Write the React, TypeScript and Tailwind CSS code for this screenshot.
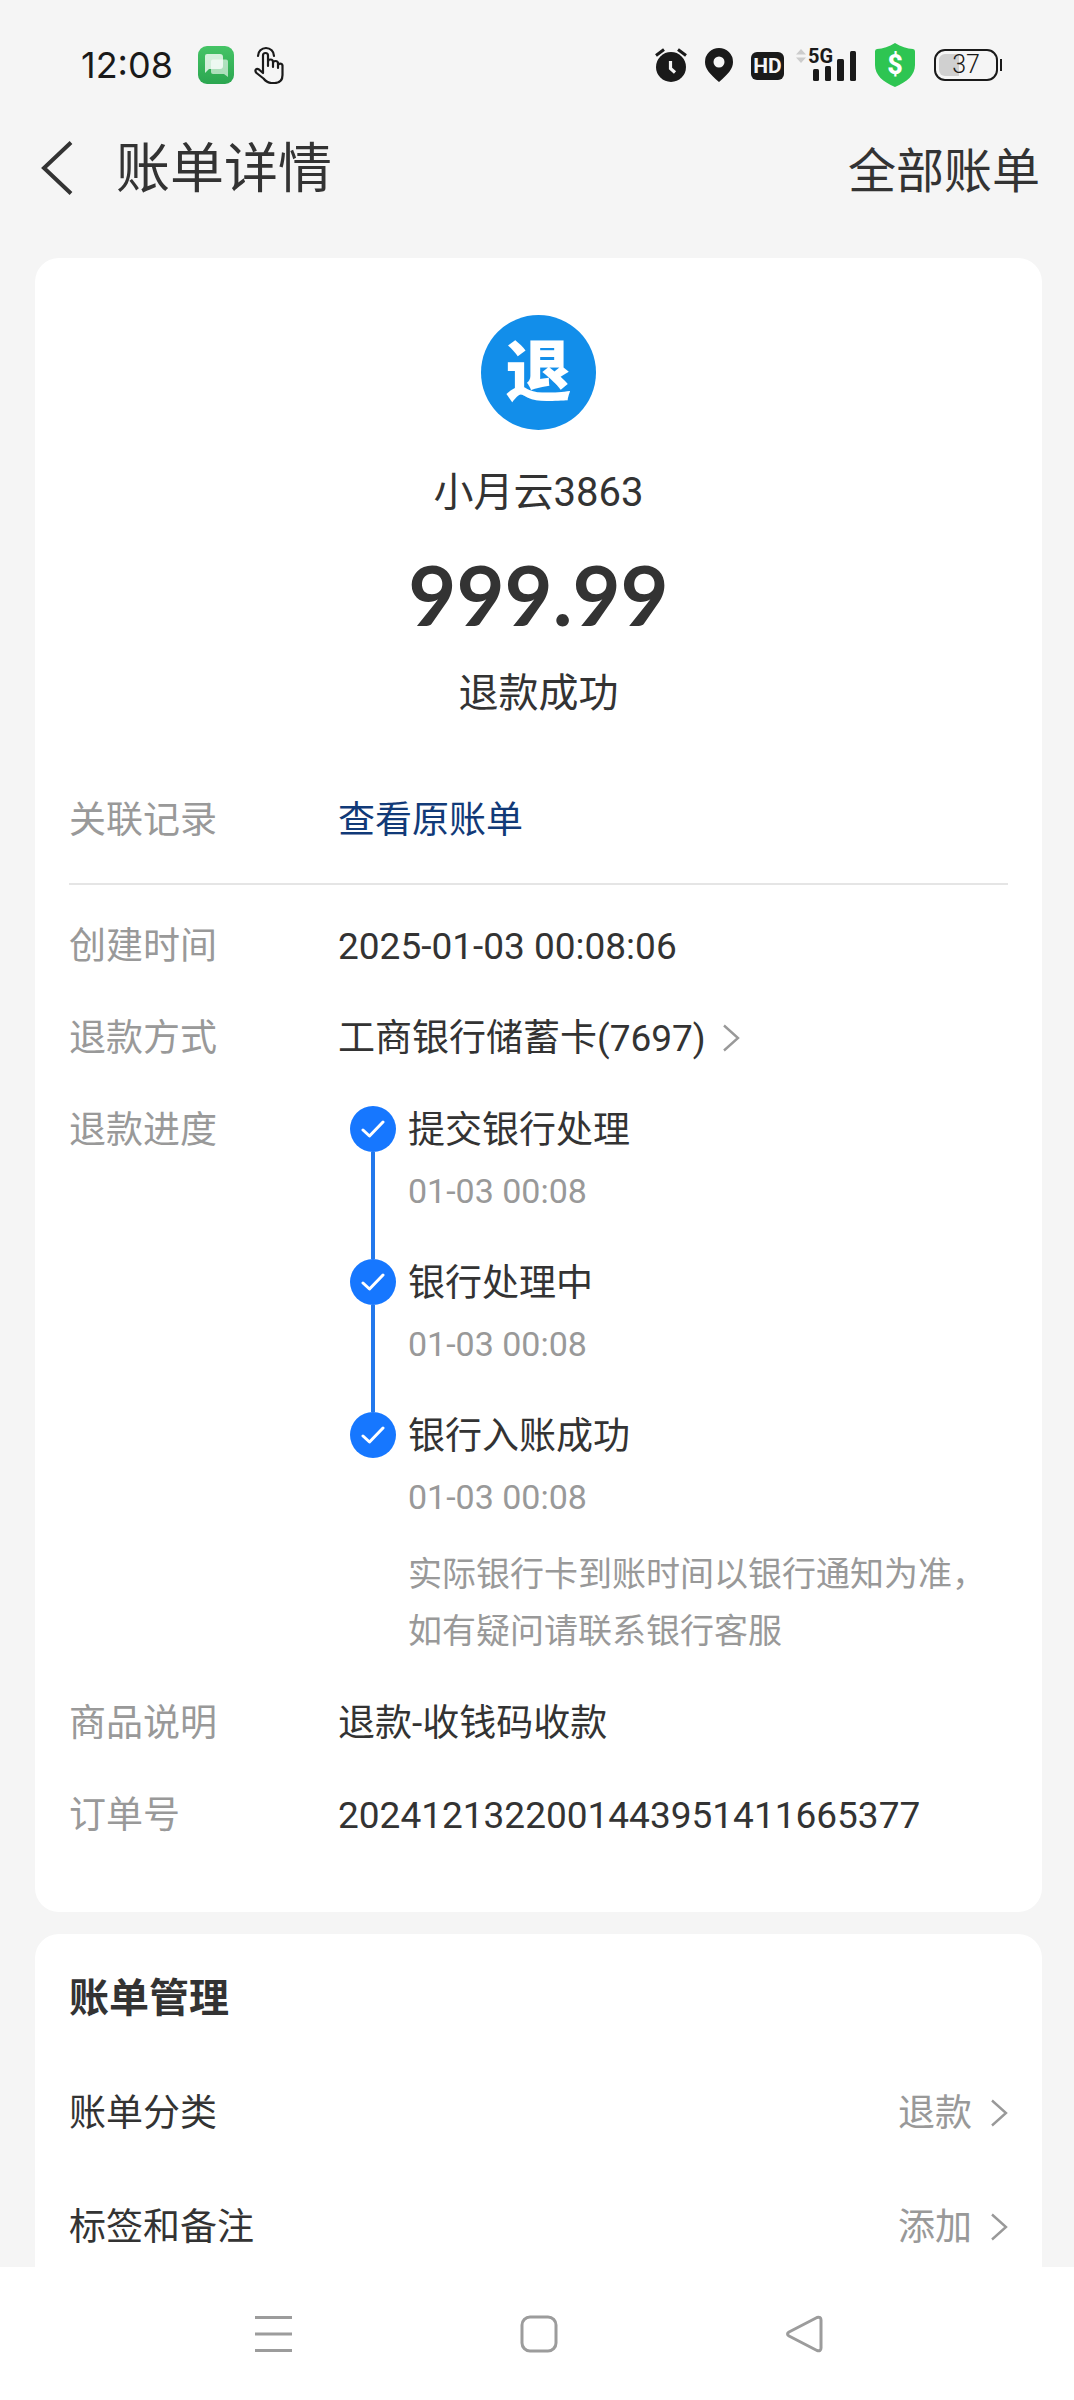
import type { ReactNode } from 'react';

const STEPS = [
  { title: '提交银行处理', time: '01-03 00:08' },
  { title: '银行处理中', time: '01-03 00:08' },
  { title: '银行入账成功', time: '01-03 00:08' },
];

const MANAGE = [
  { label: '账单分类', value: '退款' },
  { label: '标签和备注', value: '添加' },
];

function ChevronRight() {
  return (
    <svg className="mb-0.5 shrink-0" width="18" height="28" viewBox="0 0 18 28" fill="none" stroke="#999" strokeWidth="2.4" aria-hidden="true">
      <path d="M2 1.5 16 14 2 26.5" />
    </svg>
  );
}

function MessageIcon() {
  return (
    <svg width="36" height="38" viewBox="0 0 36 38" aria-hidden="true">
      <defs>
        <linearGradient id="msg" x1="0" y1="0" x2="0" y2="1">
          <stop offset="0" stopColor="#45c466" />
          <stop offset="1" stopColor="#2ba650" />
        </linearGradient>
      </defs>
      <rect width="36" height="38" rx="9" fill="url(#msg)" />
      <path d="M15 13.5h13q2 0 2 2V31l-4-3H15q-2 0-2-2V15.5q0-2 2-2z" fill="#fff" opacity=".6" />
      <path d="M9 8h13q3 0 3 3v9q0 3-3 3H11l-4 4V10q0-2 2-2z" fill="#fff" opacity=".78" />
    </svg>
  );
}

function TapIcon() {
  return (
    <svg width="30" height="38" viewBox="0 0 30 38" fill="none" stroke="#1a1a1a" strokeWidth="2.2" strokeLinecap="round" strokeLinejoin="round" aria-hidden="true">
      <path d="M4 10a8 8 0 0 1 16 0" />
      <path d="M9 25V9.5a2.5 2.5 0 0 1 5 0V20v-4a2.5 2.5 0 0 1 5 0v5-3.5a2.5 2.5 0 0 1 5 0V22v-2.5a2.3 2.3 0 0 1 4.5 0V29c0 5-3 8-8 8h-3c-4 0-6-2-8-4.500L2.500 27C0 24 2.500 22 5 23.500L9 27z" />
    </svg>
  );
}

function AlarmIcon() {
  return (
    <svg width="32" height="34" viewBox="0 0 32 34" aria-hidden="true">
      <circle cx="16" cy="19" r="15" fill="#1a1a1a" />
      <path d="M1 7.5 9 1.5M31 7.5 23 1.5" stroke="#1a1a1a" strokeWidth="3" />
      <path d="M15.5 13v7.5l4.500 4" stroke="#f5f5f5" strokeWidth="3.2" fill="none" />
    </svg>
  );
}

function PinIcon() {
  return (
    <svg width="28" height="34" viewBox="0 0 28 34" aria-hidden="true">
      <path fillRule="evenodd" d="M14 0a14 14 0 0 1 14 14c0 7-5 12-14 20C5 26 0 21 0 14A14 14 0 0 1 14 0zm0 8.5a5.5 5.5 0 1 0 0 11 5.5 5.5 0 0 0 0-11z" fill="#1a1a1a" />
    </svg>
  );
}

function SignalIcon() {
  return (
    <svg className="overflow-visible" width="60" height="34" viewBox="0 0 60 34" aria-hidden="true">
      <path d="M0 6.5 5 1l5 5.5zM0 9.5l5 5.5 5-5.5z" fill="#ccc" />
      <text x="12" y="15" fontSize="20" fontWeight="700" fill="#1a1a1a">5G</text>
      <rect x="17" y="21" width="6" height="12" rx="1.5" fill="#1a1a1a" />
      <rect x="29" y="18" width="6" height="15" rx="1.5" fill="#1a1a1a" />
      <rect x="41" y="11" width="7" height="22" rx="1.5" fill="#1a1a1a" />
      <rect x="54" y="3" width="6" height="30" rx="1.5" fill="#1a1a1a" />
    </svg>
  );
}

function ShieldIcon() {
  return (
    <svg width="42" height="44" viewBox="0 0 42 44" aria-hidden="true">
      <path d="M21 0c6 4 12 5.5 18 6q2 .3 2 2.5V22c0 10-8 17-20 22C9 39 1 32 1 22V8.500Q1 6.300 3 6c6-.5 12-2 18-6z" fill="#2ec552" />
      <text x="21" y="31" textAnchor="middle" fontSize="27" fontWeight="800" fill="#fff">$</text>
    </svg>
  );
}

function Row({ label, children }: { label: string; children: ReactNode }) {
  return (
    <div className="flex">
      <dt className="w-[269px] shrink-0 leading-14 text-[#999]">{label}</dt>
      <dd className="min-w-0 flex-1 leading-14">{children}</dd>
    </div>
  );
}

function StatusBar() {
  return (
    <div className="flex h-[130px] items-center justify-between pr-[72px] pl-[81px] text-[#1a1a1a]">
      <div className="flex items-center">
        <span className="mr-[25px] font-[Inter,sans-serif] text-[36px]">12:08</span>
        <MessageIcon />
        <span className="ml-5">
          <TapIcon />
        </span>
      </div>
      <div className="flex items-center gap-[18px]">
        <AlarmIcon />
        <PinIcon />
        <span className="mt-0.5 flex h-7 w-[33px] items-center justify-center rounded-md bg-[#1a1a1a] text-[21px] leading-7 font-bold text-[#f5f5f5]">HD</span>
        <div className="-ml-1.5">
          <SignalIcon />
        </div>
        <ShieldIcon />
        <div className="flex items-center gap-0.5">
          <div className="relative flex h-8 w-16 items-center justify-center rounded-[11px] border-2 border-[#1a1a1a] text-[25px] font-light">
            <span className="absolute inset-y-[3px] left-[3px] w-[20px] rounded-l-[6px] bg-[#d0d0d0]" />
            <span className="relative">37</span>
          </div>
          <span className="h-3 w-0.5 bg-[#1a1a1a]" />
        </div>
      </div>
    </div>
  );
}

function Header() {
  return (
    <header className="mb-[52px] flex h-[76px] items-center justify-between pr-[34px] pl-[41px]">
      <div className="flex items-center gap-[43px]">
        <button type="button" aria-label="返回">
          <svg width="32" height="54" viewBox="0 0 32 54" fill="none" stroke="#333" strokeWidth="4" aria-hidden="true">
            <path d="M30 1.5 3 27l27 25.5" />
          </svg>
        </button>
        <h1 className="pt-1 text-[54px] leading-18">账单详情</h1>
      </div>
      <a href="#all" className="pt-2 text-[48px] leading-18">全部账单</a>
    </header>
  );
}

function Progress() {
  return (
    <>
      <ol>
        {STEPS.map((step, i) => (
          <li key={step.title} className="flex gap-3 pl-3">
            <div className="flex w-[46px] flex-col items-center">
              <span className="mt-[3px] flex size-[46px] shrink-0 items-center justify-center rounded-full bg-[#1677ff]">
                <svg width="24" height="18" viewBox="0 0 24 18" fill="none" stroke="#fff" strokeWidth="3" strokeLinecap="round" strokeLinejoin="round" aria-hidden="true">
                  <path d="M2 10 8.5 16 22 2" />
                </svg>
              </span>
              {i < STEPS.length - 1 && <span className="-mb-[3px] w-1 flex-1 bg-[#2278ec]" />}
            </div>
            <div className={i < STEPS.length - 1 ? 'pb-[41px]' : ''}>
              <p>{step.title}</p>
              <p className="mt-2 text-[34px] leading-12 text-[#999]">{step.time}</p>
            </div>
          </li>
        ))}
      </ol>
      <p className="mt-[25px] pl-[70px] text-[34px] leading-[57px] text-[#999]">
        实际银行卡到账时间以银行通知为准，
        <br />
        如有疑问请联系银行客服
      </p>
    </>
  );
}

function BillCard() {
  return (
    <section className="rounded-3xl bg-white px-[34px] pt-[57px] pb-[68px]">
      <div className="flex flex-col items-center">
        <div className="flex size-[115px] items-center justify-center rounded-full bg-[#128eea] text-[66px] font-black text-white">退</div>
        <p className="mt-[35px] text-[40px] leading-14">小月云3863</p>
        <p className="mt-[25px] font-[Lato,sans-serif] text-[83px] leading-24 font-bold">999.99</p>
        <p className="mt-6 text-[40px] leading-14">退款成功</p>
      </div>

      <dl className="mt-[71px] border-b-2 border-[#e5e5e5] pb-[34px]">
        <Row label="关联记录">
          <a href="#origin" className="text-[#113a78]">查看原账单</a>
        </Row>
      </dl>

      <dl className="mt-[34px] flex flex-col gap-9">
        <Row label="创建时间">2025-01-03 00:08:06</Row>
        <Row label="退款方式">
          <a href="#card" className="flex items-center gap-4">
            工商银行储蓄卡(7697)
            <ChevronRight />
          </a>
        </Row>
        <Row label="退款进度">
          <Progress />
        </Row>
        <Row label="商品说明">退款-收钱码收款</Row>
        <Row label="订单号">2024121322001443951411665377</Row>
      </dl>
    </section>
  );
}

function ManageCard() {
  return (
    <section className="mt-[22px] flex-1 rounded-t-3xl bg-white px-[34px] pt-[37px] pb-[11px]">
      <h2 className="mb-[59px] text-[40px] leading-14 font-bold">账单管理</h2>
      <div className="flex flex-col gap-[58px]">
        {MANAGE.map((item) => (
          <a key={item.label} href="#manage" className="flex items-center justify-between leading-14">
            <span>{item.label}</span>
            <span className="flex items-center gap-[18px] text-[#999]">
              {item.value}
              <ChevronRight />
            </span>
          </a>
        ))}
      </div>
    </section>
  );
}

function NavBar() {
  return (
    <nav className="grid h-[133px] grid-cols-3 items-center justify-items-center bg-white pr-[138px] pl-[142px]">
      <button type="button" aria-label="最近任务">
        <svg width="38" height="38" viewBox="0 0 38 38" fill="none" stroke="#9c9c9c" strokeWidth="3" aria-hidden="true">
          <path d="M0 2.5h37M0 19h37M0 35.5h37" />
        </svg>
      </button>
      <button type="button" aria-label="主屏幕">
        <svg width="38" height="38" viewBox="0 0 38 38" fill="none" stroke="#9c9c9c" strokeWidth="3" aria-hidden="true">
          <rect x="2" y="2" width="34" height="34" rx="8" />
        </svg>
      </button>
      <button type="button" aria-label="返回上级">
        <svg width="38" height="38" viewBox="0 0 38 38" fill="none" stroke="#9c9c9c" strokeWidth="3" strokeLinejoin="round" aria-hidden="true">
          <path d="M32 2.5 4 17q-3 2 0 4l28 14.5q4 1 4-2.500V5q0-3.500-4-2.500z" />
        </svg>
      </button>
    </nav>
  );
}

export default function App() {
  return (
    <div className="flex min-h-screen flex-col bg-[#f5f5f5] font-[Roboto,'Noto_Sans_CJK_SC',sans-serif] text-[37px] text-[#333]">
      <StatusBar />
      <Header />
      <main className="mr-8 ml-[35px] flex flex-1 flex-col">
        <BillCard />
        <ManageCard />
      </main>
      <NavBar />
    </div>
  );
}
